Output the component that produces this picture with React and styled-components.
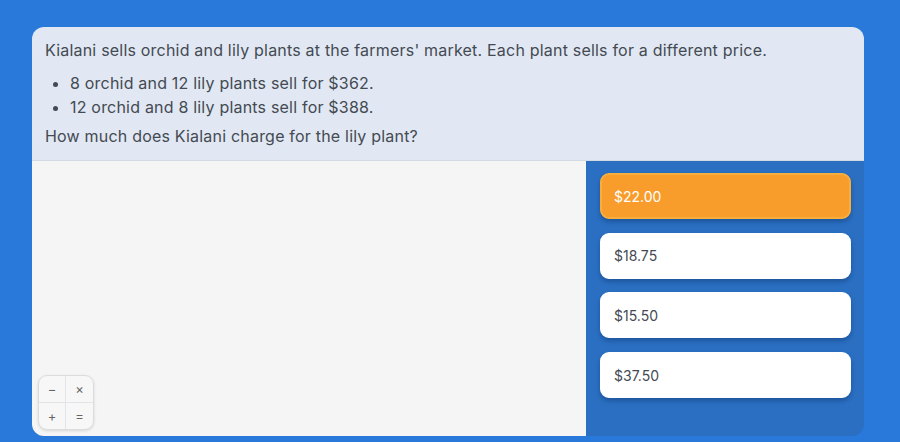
import React from "react";
import styled, { createGlobalStyle } from "styled-components";

const GlobalStyle = createGlobalStyle`
  html, body {
    margin: 0;
    padding: 0;
    background: #2879d9;
    font-family: "Inter", "Noto Sans", sans-serif;
  }
`;

const Page = styled.div`
  width: 900px;
  height: 442px;
  padding: 27px 36px 6px 32px;
  box-sizing: border-box;
  overflow: hidden;
`;

const Card = styled.div`
  height: 409px;
  display: flex;
  flex-direction: column;
  border-radius: 12px;
  overflow: hidden;
`;

const Question = styled.div`
  background: #e1e8f3;
  color: #444a52;
  font-size: 16px;
  line-height: 24px;
  letter-spacing: 0.2px;
  padding: 11px 13px 12px;
  border-bottom: 1px solid #d4dae3;
  p {
    margin: 0;
  }
  ul {
    margin: 9px 0 5px;
    padding-left: 25px;
  }
`;

const Body = styled.div`
  flex: 1;
  display: flex;
`;

const Workspace = styled.div`
  flex: 1;
  background: #f5f5f5;
  position: relative;
`;

const Answers = styled.div`
  width: 278px;
  background: #2a6fc2;
  padding: 12px 13px 0 14px;
  box-sizing: border-box;
  display: flex;
  flex-direction: column;
  gap: 13.7px;
`;

const Option = styled.button`
  height: 46px;
  border-radius: 9px;
  border: 2px solid ${(p) => (p.$selected ? "#f7ae3c" : "#fff")};
  background: ${(p) => (p.$selected ? "#f89d2c" : "#fff")};
  color: ${(p) => (p.$selected ? "#fff" : "#444a52")};
  font-family: inherit;
  font-size: 14px;
  text-align: left;
  padding: 0 12px;
  box-shadow: 0 3px 4px rgba(10, 40, 90, 0.35);
`;

const Calc = styled.div`
  position: absolute;
  left: 6px;
  bottom: 6px;
  width: 56px;
  height: 55px;
  box-sizing: border-box;
  border-radius: 9px;
  border: 1px solid #dcdcdc;
  background: #f7f7f7;
  box-shadow: 0 1px 3px rgba(0, 0, 0, 0.12);
  display: grid;
  grid-template-columns: 1fr 1fr;
  grid-template-rows: 1fr 1fr;
  overflow: hidden;
`;

const Key = styled.div`
  display: flex;
  align-items: center;
  justify-content: center;
  font-size: 13px;
  color: #666;
  border-right: ${(p) => (p.$col === 0 ? "1px solid #e2e4e8" : "none")};
  border-bottom: ${(p) => (p.$row === 0 ? "1px solid #e2e4e8" : "none")};
`;

const options = ["$22.00", "$18.75", "$15.50", "$37.50"];
const keys = ["−", "×", "+", "="];

export default function App() {
  return (
    <>
      <GlobalStyle />
      <Page>
        <Card>
          <Question>
            <p>
              Kialani sells orchid and lily plants at the farmers' market. Each
              plant sells for a different price.
            </p>
            <ul>
              <li>8 orchid and 12 lily plants sell for $362.</li>
              <li>12 orchid and 8 lily plants sell for $388.</li>
            </ul>
            <p>How much does Kialani charge for the lily plant?</p>
          </Question>
          <Body>
            <Workspace>
              <Calc>
                {keys.map((k, i) => (
                  <Key key={k} $col={i % 2} $row={Math.floor(i / 2)}>
                    {k}
                  </Key>
                ))}
              </Calc>
            </Workspace>
            <Answers>
              {options.map((o, i) => (
                <Option key={o} $selected={i === 0}>
                  {o}
                </Option>
              ))}
            </Answers>
          </Body>
        </Card>
      </Page>
    </>
  );
}
